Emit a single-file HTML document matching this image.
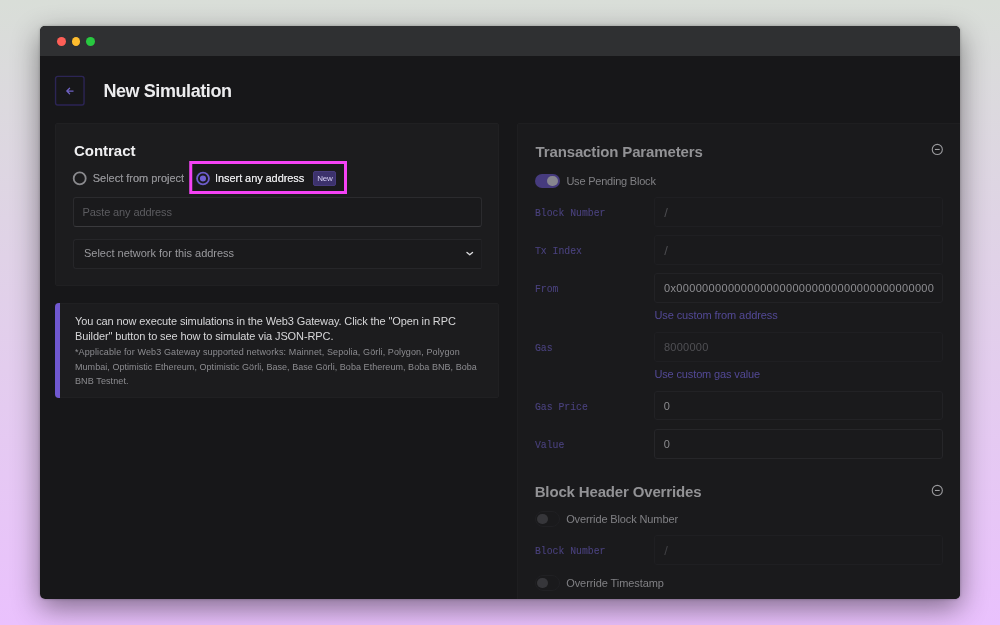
<!DOCTYPE html>
<html lang="en">
<head>
<meta charset="utf-8">
<title>New Simulation</title>
<style>
*{box-sizing:border-box;margin:0;padding:0}
html,body{width:1000px;height:625px;overflow:hidden}
body{font-family:"Liberation Sans",sans-serif;background:linear-gradient(180deg,#d9ded8 0%,#eac1fd 100%);position:relative;color:#e4e4e6}
.abs{position:absolute}
.win{will-change:transform;position:absolute;left:40px;top:26px;width:920px;height:573px;border-radius:5px;background:#171719;overflow:hidden;}
.shadow{position:absolute;left:40px;top:26px;width:920px;height:573px;border-radius:5px;box-shadow:0 9px 28px rgba(0,0,0,.45),0 0 3px rgba(0,0,0,.25)}
.bar{position:absolute;left:0;top:0;width:920px;height:30px;background:#2f3032}
.dot{position:absolute;top:11px;width:9px;height:9px;border-radius:50%}
.t{position:absolute;white-space:nowrap;line-height:1}
.card{position:absolute;background:#1c1c1e;border-radius:2px;border:1px solid #202022}
.inp{position:absolute;height:30px;border:1px solid #2b2b2e;border-radius:3px;background:#1a1a1c}
.mono{font-family:"Liberation Mono",monospace}
</style>
</head>
<body>
<div class="shadow"></div>
<div class="win">
  <div class="bar">
    <span class="dot" style="left:17px;background:#fe5f57"></span>
    <span class="dot" style="left:32px;width:8.3px;background:#febc2e"></span>
    <span class="dot" style="left:46px;background:#28c840"></span>
  </div>

  <!-- back button -->
  <svg class="abs" style="left:14px;top:49px" width="32" height="32" viewBox="0 0 32 32"><rect x="1.55" y="1.35" width="28.5" height="28.6" rx="2.2" fill="none" stroke="#2c2555" stroke-width="1.4"/></svg>
  <svg class="abs" style="left:25px;top:60px" width="10" height="10" viewBox="0 0 10 10"><path d="M8.1 5H2M4.6 2.2L1.8 5l2.8 2.8" fill="none" stroke="#6e61c2" stroke-width="1.25" stroke-linecap="round" stroke-linejoin="round"/></svg>
  <div class="t" id="title" style="left:63.40px;top:56px;font-size:18px;font-weight:700;color:#ececee;letter-spacing:-0.417px">New Simulation</div>

  <!-- contract card -->
  <div class="card" style="left:15px;top:97px;width:444px;height:163px"></div>
  <div class="t" id="contract" style="left:33.50px;top:117px;font-size:15px;font-weight:700;color:#f0f0f2;letter-spacing:-0.025px;transform:translateY(.15px) scale(1.0005)">Contract</div>

  <svg class="abs" style="left:0;top:130px" width="320" height="45" viewBox="0 130 320 45">
    <circle cx="39.7" cy="152.4" r="6" fill="none" stroke="#8a8a8e" stroke-width="1.8"/>
    <rect x="150.75" y="136.5" width="154.75" height="30" fill="#1a1a1c" stroke="#f542f5" stroke-width="3"/>
    <circle cx="163" cy="152.5" r="5.95" fill="none" stroke="#6c5cc9" stroke-width="1.8"/>
    <circle cx="162.95" cy="152.45" r="3.05" fill="#7060d2"/>
  </svg>
  <div class="t" id="sfp" style="left:52.80px;top:146.5px;font-size:11px;color:#8c8c90;letter-spacing:-0.025px;text-shadow:0 0 .5px currentColor">Select from project</div>

  <div class="t" id="iaa" style="left:175.1px;top:146.5px;font-size:11px;color:#e2e2e4;letter-spacing:-0.08px;text-shadow:0 0 .5px currentColor">Insert any address</div>
  <div class="abs" style="left:273.2px;top:144.8px;width:23px;height:15px;background:#3c326c;border:1px solid #463a7c;border-radius:2px"></div>
  <div class="t" id="new" style="left:277.20px;top:149px;font-size:8px;color:#d6d0f4;letter-spacing:-0.213px">New</div>

  <div class="inp" style="left:33px;top:171px;width:409px;border-bottom-color:#3a3a3d"></div>
  <div class="t" id="paste" style="left:42.60px;top:181px;font-size:11px;color:#5c5c60;letter-spacing:-0.113px">Paste any address</div>

  <div class="inp" style="left:33px;top:213px;width:409px;border-color:#262629;border-right-color:#202023;border-radius:3px 1px 1px 3px"></div>
  <div class="t" id="selnet" style="left:44.00px;top:222px;font-size:11px;color:#9a9a9e;letter-spacing:-0.01px">Select network for this address</div>
  <svg class="abs" style="left:425px;top:224px" width="10" height="8" viewBox="0 0 10 8"><path d="M2.0 2.55L4.75 4.75L7.5 2.55" fill="none" stroke="#dcdcde" stroke-width="1.4" stroke-linecap="round" stroke-linejoin="round"/></svg>

  <!-- info card -->
  <div class="card" style="left:15px;top:277px;width:444px;height:95px"></div>
  <div class="abs" style="left:15.3px;top:277px;width:4.7px;height:95px;background:#7058d0;border-radius:4px 0 0 4px"></div>
  <div class="t" id="i1" style="left:35.00px;top:290px;font-size:11px;color:#d6d6d8;letter-spacing:-0.117px">You can now execute simulations in the Web3 Gateway. Click the "Open in RPC</div>
  <div class="t" id="i2" style="left:35.00px;top:305px;font-size:11px;color:#d6d6d8;letter-spacing:-0.104px">Builder" button to see how to simulate via JSON-RPC.</div>
  <div class="t" id="s1" style="left:35.00px;top:321.5px;font-size:9px;color:#8c8c90;letter-spacing:0.12px">*Applicable for Web3 Gateway supported networks: Mainnet, Sepolia, Görli, Polygon, Polygon</div>
  <div class="t" id="s2" style="left:35.00px;top:336.5px;font-size:9px;color:#8c8c90;letter-spacing:0.05px">Mumbai, Optimistic Ethereum, Optimistic Görli, Base, Base Görli, Boba Ethereum, Boba BNB, Boba</div>
  <div class="t" id="s3" style="left:35.00px;top:350.5px;font-size:9px;color:#8c8c90;letter-spacing:0.107px">BNB Testnet.</div>

  <!-- right card -->
  <div class="card" style="left:477px;top:97px;width:450px;height:480px;background:#1a1a1c;border-color:#1e1e20"></div>
  <div class="t" id="tp" style="left:495.60px;top:118px;font-size:15px;font-weight:700;color:#929295;letter-spacing:-0.14px">Transaction Parameters</div>
  <svg class="abs" style="left:891px;top:117px" width="13" height="13" viewBox="0 0 13 13"><circle cx="6.3" cy="6.45" r="5.05" fill="none" stroke="#98989b" stroke-width="1.1"/><path d="M4.3 6.45h4" stroke="#a8a8ab" stroke-width="1" stroke-linecap="round"/></svg>

  <div class="abs" style="left:494.5px;top:147.5px;width:25.6px;height:14.8px;border-radius:8px;background:#463b7e"></div>
  <div class="abs" style="left:507px;top:149.5px;width:11px;height:10.8px;border-radius:50%;background:#87868f"></div>
  <div class="t" id="upb" style="left:526.40px;top:149.5px;font-size:11px;color:#808084;letter-spacing:-0.215px">Use Pending Block</div>

  <div class="t mono" id="l1" style="left:495.40px;top:180.5px;font-size:11.5px;color:#4a427e;transform:scaleX(.85);transform-origin:0 50%;-webkit-text-stroke:.12px currentColor">Block Number</div>
  <div class="inp" style="left:614px;top:171px;width:289px;border-color:#1f1f22"></div>
  <div class="t" style="left:624.2px;top:181px;font-size:13px;color:#4c4c50;margin-top:-1px">/</div>

  <div class="t mono" id="l2" style="left:495.40px;top:218.5px;font-size:11.5px;color:#4a427e;transform:scaleX(.85);transform-origin:0 50%;-webkit-text-stroke:.12px currentColor">Tx Index</div>
  <div class="inp" style="left:614px;top:209px;width:289px;border-color:#1f1f22"></div>
  <div class="t" style="left:624.2px;top:219px;font-size:13px;color:#4c4c50;margin-top:-1px">/</div>

  <div class="t mono" id="l3" style="left:495.1px;top:256.5px;font-size:11.5px;color:#4a427e;transform:scaleX(.85);transform-origin:0 50%;-webkit-text-stroke:.12px currentColor">From</div>
  <div class="inp" style="left:614px;top:247px;width:289px;border-color:#222225"></div>
  <div class="t" id="addr" style="left:624.00px;top:257px;font-size:11px;color:#8e8e92;letter-spacing:0.332px">0x0000000000000000000000000000000000000000</div>
  <div class="t" id="ucfa" style="left:614.40px;top:284px;font-size:11px;color:#534996;letter-spacing:-0.092px">Use custom from address</div>

  <div class="t mono" id="l4" style="left:495.40px;top:315.5px;font-size:11.5px;color:#4a427e;transform:scaleX(.85);transform-origin:0 50%;-webkit-text-stroke:.12px currentColor">Gas</div>
  <div class="inp" style="left:614px;top:306px;width:289px;border-color:#1f1f22"></div>
  <div class="t" id="gasv" style="left:624.00px;top:316px;font-size:11px;color:#505054;letter-spacing:0.249px">8000000</div>
  <div class="t" id="ucgv" style="left:614.40px;top:343px;font-size:11px;color:#534996;letter-spacing:-0.132px">Use custom gas value</div>

  <div class="t mono" id="l5" style="left:495.40px;top:374.5px;font-size:11.5px;color:#4a427e;transform:scaleX(.85);transform-origin:0 50%;-webkit-text-stroke:.12px currentColor">Gas Price</div>
  <div class="inp" style="left:614px;top:365px;width:289px;height:29px;border-color:#222225"></div>
  <div class="t" style="left:623.7px;top:374.5px;font-size:11px;color:#8c8c8f">0</div>

  <div class="t mono" id="l6" style="left:495.40px;top:412.5px;font-size:11.5px;color:#4a427e;transform:scaleX(.85);transform-origin:0 50%;-webkit-text-stroke:.12px currentColor">Value</div>
  <div class="inp" style="left:614px;top:403px;width:289px;border-color:#262629"></div>
  <div class="t" style="left:623.7px;top:412.5px;font-size:11px;color:#8c8c8f">0</div>

  <div class="t" id="bho" style="left:494.7px;top:458px;font-size:15px;font-weight:700;color:#929295;letter-spacing:-0.154px">Block Header Overrides</div>
  <svg class="abs" style="left:891px;top:458px" width="13" height="13" viewBox="0 0 13 13"><circle cx="6.3" cy="6.45" r="5.05" fill="none" stroke="#98989b" stroke-width="1.1"/><path d="M4.3 6.45h4" stroke="#a8a8ab" stroke-width="1" stroke-linecap="round"/></svg>

  <div class="abs" style="left:494.5px;top:485.4px;width:25.6px;height:15.4px;border-radius:8px;background:#1a1a1c;border:1px solid #202023"></div>
  <div class="abs" style="left:496.7px;top:487.6px;width:11px;height:10.8px;border-radius:50%;background:#36363a"></div>
  <div class="t" id="obn" style="left:526.20px;top:487.5px;font-size:11px;color:#808084;letter-spacing:-0.122px">Override Block Number</div>

  <div class="t mono" id="l7" style="left:495.40px;top:518.5px;font-size:11.5px;color:#4a427e;transform:scaleX(.85);transform-origin:0 50%;-webkit-text-stroke:.12px currentColor">Block Number</div>
  <div class="inp" style="left:614px;top:509px;width:289px;border-color:#1f1f22"></div>
  <div class="t" style="left:624.2px;top:519px;font-size:13px;color:#404044;margin-top:-1px">/</div>

  <div class="abs" style="left:494.5px;top:549.4px;width:25.6px;height:15.4px;border-radius:8px;background:#1a1a1c;border:1px solid #202023"></div>
  <div class="abs" style="left:496.7px;top:551.6px;width:11px;height:10.8px;border-radius:50%;background:#36363a"></div>
  <div class="t" id="ots" style="left:526.20px;top:551.5px;font-size:11px;color:#808084;letter-spacing:-0.077px">Override Timestamp</div>
</div>
</body>
</html>
